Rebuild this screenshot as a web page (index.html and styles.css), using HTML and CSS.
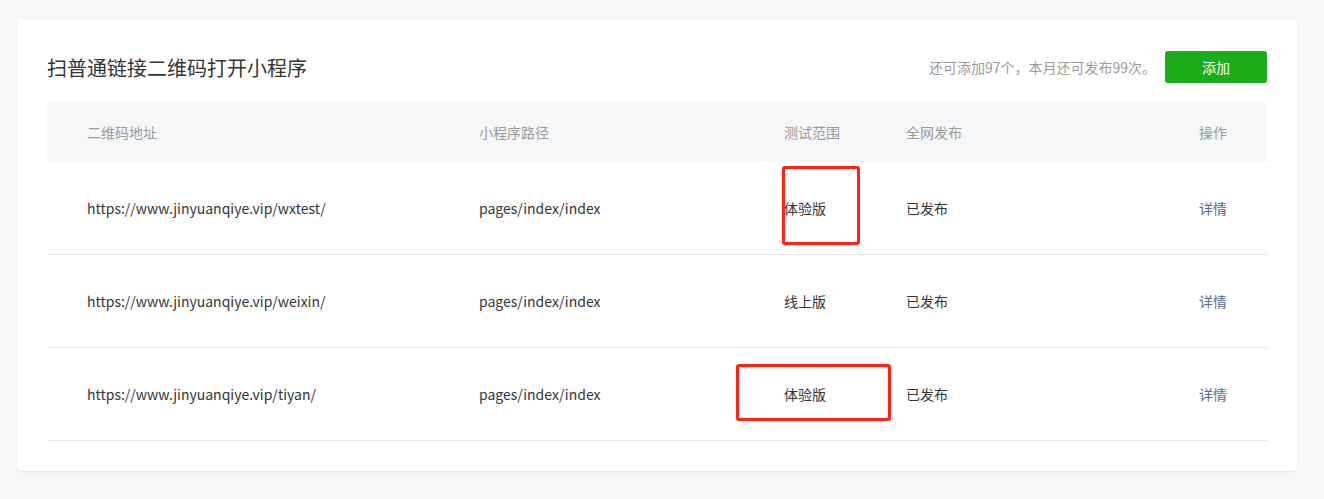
FILE: index.html
```html
<!DOCTYPE html>
<html lang="zh">
<head>
    <meta charset="UTF-8">
    <title>扫普通链接二维码打开小程序</title>
    <link rel="stylesheet" href="styles.css">
</head>
<body>
    <div class="panel">
        <div class="panel-head">
            <h2 class="panel-title">扫普通链接二维码打开小程序</h2>
            <div class="panel-extra">
                <span class="tips">还可添加97个，本月还可发布99次。</span>
                <button class="btn-primary">添加</button>
            </div>
        </div>

        <div class="table">
            <div class="tr th">
                <div>二维码地址</div>
                <div>小程序路径</div>
                <div>测试范围</div>
                <div>全网发布</div>
                <div class="op">操作</div>
            </div>
            <div class="tr">
                <div>https://www.jinyuanqiye.vip/wxtest/</div>
                <div>pages/index/index</div>
                <div class="mark-cell">体验版<span class="mark mark-a"></span></div>
                <div>已发布</div>
                <div class="op"><a href="#">详情</a></div>
            </div>
            <div class="tr">
                <div>https://www.jinyuanqiye.vip/weixin/</div>
                <div>pages/index/index</div>
                <div>线上版</div>
                <div>已发布</div>
                <div class="op"><a href="#">详情</a></div>
            </div>
            <div class="tr">
                <div>https://www.jinyuanqiye.vip/tiyan/</div>
                <div>pages/index/index</div>
                <div class="mark-cell">体验版<span class="mark mark-b"></span></div>
                <div>已发布</div>
                <div class="op"><a href="#">详情</a></div>
            </div>
        </div>
    </div>
</body>
</html>
```

FILE: styles.css
```css
body {
    margin: 0;
    padding: 20px 27px 28px 17px;
    background: #f6f7f9;
    font-family: "Noto Sans CJK SC", "Noto Sans", sans-serif;
    font-size: 14px;
    color: #353535;
}

.panel {
    background: #fff;
    border-radius: 4px;
    box-shadow: 0 1px 2px rgba(0, 0, 0, 0.08);
    padding: 31px 30px 30px;
}

.panel-head {
    display: flex;
    align-items: center;
    justify-content: space-between;
    margin-bottom: 19px;
}

.panel-title {
    margin: 0;
    font-size: 20px;
    font-weight: normal;
    color: #353535;
}

.panel-extra {
    display: flex;
    align-items: center;
}

.tips {
    color: #9a9a9a;
    font-size: 14px;
    margin-right: 9px;
}

.btn-primary {
    width: 102px;
    height: 32px;
    border: 0;
    border-radius: 3px;
    background: #1aad19;
    color: #fff;
    font-family: inherit;
    font-size: 14px;
    cursor: pointer;
}

/* 表格 */
.tr {
    display: grid;
    grid-template-columns: 392px 305px 122px 1fr auto;
    align-items: center;
    height: 92px;
    padding: 0 40px;
    border-bottom: 1px solid #e7e7eb;
    line-height: 18px;
}

.tr.th {
    height: 60px;
    background: #f6f7f9;
    border-bottom: 0;
    color: #9a9a9a;
}

.op {
    text-align: right;
}

.op a {
    color: #576b95;
    text-decoration: none;
}

/* 标注框 */
.mark-cell {
    position: relative;
}

.mark {
    position: absolute;
    border: 3px solid #ff2317;
    border-radius: 3px;
    box-sizing: border-box;
}

.mark-a {
    left: -2px;
    top: -33px;
    width: 78px;
    height: 79px;
}

.mark-b {
    left: -48px;
    top: -21px;
    width: 155px;
    height: 57px;
}
```
